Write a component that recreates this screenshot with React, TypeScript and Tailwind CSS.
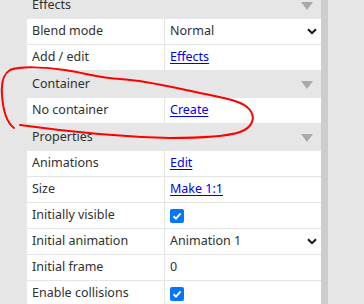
import React from 'react';

type Row =
  | { kind: 'header'; label: string }
  | { kind: 'text'; label: string; value: string }
  | { kind: 'link'; label: string; value: string }
  | { kind: 'select'; label: string; value: string }
  | { kind: 'check'; label: string };

const rows: Row[] = [
  { kind: 'header', label: 'Effects' },
  { kind: 'select', label: 'Blend mode', value: 'Normal' },
  { kind: 'link', label: 'Add / edit', value: 'Effects' },
  { kind: 'header', label: 'Container' },
  { kind: 'link', label: 'No container', value: 'Create' },
  { kind: 'header', label: 'Properties' },
  { kind: 'link', label: 'Animations', value: 'Edit' },
  { kind: 'link', label: 'Size', value: 'Make 1:1' },
  { kind: 'check', label: 'Initially visible' },
  { kind: 'select', label: 'Initial animation', value: 'Animation 1' },
  { kind: 'text', label: 'Initial frame', value: '0' },
  { kind: 'check', label: 'Enable collisions' },
];

function Chevron() {
  return (
    <svg width="10" height="7" viewBox="0 0 10 7" className="mr-[4px]">
      <path d="M1 1.2 L5 5.2 L9 1.2" fill="none" stroke="#111" strokeWidth="2" />
    </svg>
  );
}

function Triangle() {
  return (
    <svg width="12" height="8" viewBox="0 0 12 8" className="mr-[8px]">
      <path d="M0 0 L12 0 L6 8 Z" fill="#a9a9a9" />
    </svg>
  );
}

function Check() {
  return (
    <span className="flex w-[14px] h-[14px] rounded-[2px] bg-[#0075ff] items-center justify-center">
      <svg width="10" height="10" viewBox="0 0 10 10">
        <path d="M1.5 5.2 L4 7.6 L8.6 2.4" fill="none" stroke="#fff" strokeWidth="2" />
      </svg>
    </span>
  );
}

function Value({ row }: { row: Row }) {
  if (row.kind === 'link')
    return <span className="text-[#0000ee] underline underline-offset-[2px]">{row.value}</span>;
  if (row.kind === 'select')
    return (
      <div className="flex flex-1 items-center justify-between">
        <span>{row.value}</span>
        <Chevron />
      </div>
    );
  if (row.kind === 'check') return <Check />;
  if (row.kind === 'text') return <span>{row.value}</span>;
  return null;
}

export default function App() {
  return (
    <div
      className="relative flex w-[364px] h-[304px] overflow-hidden bg-[#e6e6e6] text-[12.5px] text-[#303030]"
      style={{ fontFamily: '"Noto Sans", "Open Sans", sans-serif' }}
    >
      <div className="w-[27px] shrink-0" />
      <div className="w-[294px] shrink-0 -mt-[8px] flex flex-col">
        {rows.map((row, i) =>
          row.kind === 'header' ? (
            <div key={i} className="flex h-[27px] shrink-0 items-center justify-between pl-[5px] bg-[#e6e6e6]">
              <span>{row.label}</span>
              <Triangle />
            </div>
          ) : (
            <div key={i} className="flex h-[26px] shrink-0 bg-white border-b border-[#e4e4e4]">
              <div className="w-[138px] shrink-0 flex items-center pl-[5px] border-r border-[#e4e4e4]">
                {row.label}
              </div>
              <div className="flex flex-1 items-center pl-[5px]">
                <Value row={row} />
              </div>
            </div>
          )
        )}
      </div>
      <div className="w-[7px] shrink-0 bg-[#cdcdcd]" />
      <div className="flex-1" />

      <svg className="absolute left-0 top-0 pointer-events-none" width="364" height="304" viewBox="0 0 364 304">
        <path
          d="M14 128 C6 122 3 110 2 95 C1 82 3 74 10 70 C20 66 45 67 65 70 C85 73 100 78 120 79 C150 81 175 88 200 93 C225 98 243 101 250 110 C256 118 252 128 240 132 C225 137 200 138 170 138 C130 137 70 132 20 125"
          fill="none"
          stroke="#f00"
          strokeWidth="2"
          strokeLinecap="round"
        />
      </svg>
    </div>
  );
}
